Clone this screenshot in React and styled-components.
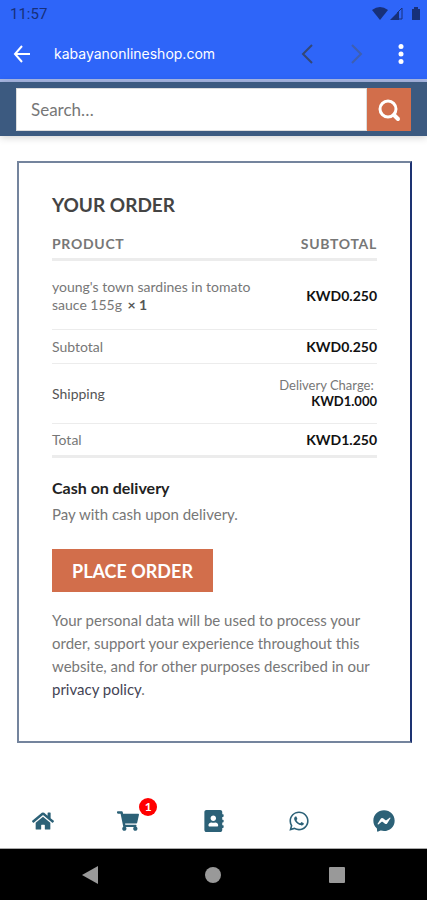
import styled, { createGlobalStyle } from "styled-components";
import {
  FaAddressBook,
  FaFacebookMessenger,
  FaHome,
  FaShoppingCart,
  FaWhatsapp,
} from "react-icons/fa";

const GlobalStyle = createGlobalStyle`
  * {
    box-sizing: border-box;
  }

  body {
    margin: 0;
    background: #fff;
    color: #777;
    font-family: Lato, "Liberation Sans", sans-serif;
    font-size: 14px;
  }

  svg {
    display: block;
  }
`;

const Page = styled.div`
  display: flex;
  flex-direction: column;
  min-height: 100vh;
`;

const StatusBar = styled.div`
  display: flex;
  align-items: center;
  justify-content: space-between;
  height: 28px;
  padding: 0 6px 0 10px;
  background: #2e65f9;
  color: #17307a;
  font-family: Roboto, sans-serif;
  font-size: 15px;
`;

const BrowserBar = styled.div`
  display: flex;
  align-items: center;
  height: 54px;
  padding: 0 23px 0 13px;
  border-bottom: 3px solid #a9b9e6;
  background: #2e65f9;
`;

const SiteName = styled.div`
  flex: 1;
  padding-left: 22px;
  color: #fff;
  font-family: Inter, sans-serif;
  font-size: 14px;
`;

const Button = styled.button`
  padding: 0;
  border: 0;
  background: none;
  color: #fff;
  font-family: inherit;
  cursor: pointer;
`;

const BarButton = styled(Button)`
  color: ${(props) => props.$color || "#fff"};
  margin-left: ${(props) => props.$gap || 0}px;
`;

const Header = styled.header`
  padding: 6px 16px 5px;
  background: #3c5a80;
  box-shadow: 0 1px 8px rgba(0, 0, 0, 0.2);
`;

const SearchForm = styled.form`
  display: flex;
  height: 43px;
`;

const SearchInput = styled.input`
  flex: 1;
  min-width: 0;
  padding: 0 14px;
  border: 1px solid #ddd;
  background: #fff;
  color: #555;
  font-family: inherit;
  font-size: 17px;

  &::placeholder {
    color: #777;
    opacity: 1;
  }
`;

const SearchButton = styled(Button)`
  display: flex;
  align-items: center;
  justify-content: center;
  width: 44px;
  background: #d26e4b;
`;

const Main = styled.main`
  flex: 1;
  padding: 25px 15px 51px 17px;
`;

const OrderBox = styled.section`
  padding: 31px 33px 40px;
  border: 2px solid #74849d;
  border-right-color: #1d3272;
`;

const Title = styled.h3`
  margin: 0;
  color: #444;
  font-size: 19px;
  font-weight: 700;
  line-height: 22px;
`;

const OrderTable = styled.table`
  width: 100%;
  border-collapse: collapse;
  line-height: 18px;

  th,
  td {
    padding: 8px 0 7px;
    border-bottom: 1px solid #ececec;
    font-weight: 400;
    text-align: left;
  }

  th:last-child,
  td:last-child {
    text-align: right;
    white-space: nowrap;
  }

  thead th {
    padding: 19px 0 5px;
    border-bottom: 3px solid #ececec;
    color: #777;
    font-weight: 700;
    letter-spacing: 0.05em;
  }

  tbody td {
    padding: 17px 0 15px;
  }

  tbody td:first-child {
    padding-right: 10px;
  }

  tfoot tr:last-child > * {
    padding: 7px 0 6px;
    border-bottom: 3px solid #ececec;
  }
`;

const Quantity = styled.strong`
  padding-left: 2px;
  color: #555;
`;

const Price = styled.strong`
  color: #111;
  font-size: ${(props) => (props.$small ? 13 : 14)}px;
`;

const RowLabel = styled.span`
  color: ${(props) => (props.$dark ? "#555" : "#777")};
`;

const Shipping = styled.div`
  padding: 5px 0 7px;
  font-size: 13px;
  line-height: 16px;
`;

const Payment = styled.div`
  padding: 17px 0 22px;
  font-size: 15px;
  line-height: 26px;
`;

const Method = styled.div`
  color: #222;
  font-size: 16px;
  font-weight: 700;
`;

const PlaceOrder = styled(Button)`
  height: 43px;
  padding: 0 20px;
  background: #d26e4b;
  font-size: 18px;
  font-weight: 700;
`;

const Privacy = styled.p`
  margin: 17px 0 0;
  font-size: 15px;
  line-height: 23px;

  a {
    color: #445;
    text-decoration: none;
  }
`;

const TabBar = styled.nav`
  display: flex;
  height: 55px;
  border-bottom: 1px solid #aaa;
`;

const Tab = styled.a`
  flex: 1;
  display: flex;
  align-items: center;
  justify-content: center;
  color: #2c6177;
  font-size: 22px;
`;

const TabIcon = styled.span`
  position: relative;
`;

const Badge = styled.span`
  position: absolute;
  top: -12px;
  right: -18px;
  width: 18px;
  border-radius: 9px;
  background: #f00;
  color: #fff;
  font-size: 12px;
  font-weight: 700;
  line-height: 18px;
  text-align: center;
`;

const SystemBar = styled.div`
  display: flex;
  align-items: center;
  justify-content: space-around;
  height: 51px;
  padding: 0 28px;
  background: #000;
  color: #999;
`;

const tabs = [
  { name: "Home", Icon: FaHome },
  { name: "Cart", Icon: FaShoppingCart, count: 1 },
  { name: "Contact", Icon: FaAddressBook },
  { name: "WhatsApp", Icon: FaWhatsapp },
  { name: "Messenger", Icon: FaFacebookMessenger },
];

const StatusIcons = () => (
  <svg width="50" height="16" viewBox="0 0 50 16" fill="currentColor">
    <path d="M1 4Q9 -2 17 4L9 14Z" />
    <path d="M19 14L28 5V14Z" />
    <path d="M26 7L31 2V13H27" fill="none" stroke="currentColor" strokeWidth="1" />
    <path d="M41 3H43V1H47V3H49V14H41Z" />
  </svg>
);

const TopBar = () => (
  <>
    <StatusBar>
      <span>11:57</span>
      <StatusIcons />
    </StatusBar>
    <BrowserBar>
      <BarButton aria-label="Back">
        <svg width="19" height="20" fill="none" stroke="currentColor" strokeWidth="2">
          <path d="M17 10H3M9 2L2 10L9 18" />
        </svg>
      </BarButton>
      <SiteName>kabayanonlineshop.com</SiteName>
      <BarButton aria-label="Previous page" $color="#344775">
        <svg width="12" height="20" fill="none" stroke="currentColor" strokeWidth="2">
          <path d="M11 1L2 10L11 19" />
        </svg>
      </BarButton>
      <BarButton aria-label="Next page" $color="#3e5fb0" $gap={38}>
        <svg width="12" height="20" fill="none" stroke="currentColor" strokeWidth="2">
          <path d="M1 1L10 10L1 19" />
        </svg>
      </BarButton>
      <BarButton aria-label="Menu" $gap={35}>
        <svg width="6" height="20" viewBox="0 0 6 20" fill="currentColor">
          <circle cx="3" cy="2.5" r="2.5" />
          <circle cx="3" cy="10" r="2.5" />
          <circle cx="3" cy="17.5" r="2.5" />
        </svg>
      </BarButton>
    </BrowserBar>
  </>
);

const Search = () => (
  <Header>
    <SearchForm role="search" onSubmit={(e) => e.preventDefault()}>
      <SearchInput type="search" aria-label="Search" placeholder="Search…" />
      <SearchButton type="submit" aria-label="Submit search">
        <svg width="24" height="24" fill="none" stroke="currentColor" strokeWidth="3">
          <circle cx="11" cy="11" r="8" />
          <path d="M17 17L21 21" strokeWidth="4" strokeLinecap="round" />
        </svg>
      </SearchButton>
    </SearchForm>
  </Header>
);

const Order = () => (
  <OrderBox>
    <Title>YOUR ORDER</Title>
    <OrderTable>
      <thead>
        <tr>
          <th scope="col">PRODUCT</th>
          <th scope="col">SUBTOTAL</th>
        </tr>
      </thead>
      <tbody>
        <tr>
          <td>
            young's town sardines in tomato sauce 155g{" "}
            <Quantity>×&nbsp;1</Quantity>
          </td>
          <td>
            <Price>KWD0.250</Price>
          </td>
        </tr>
      </tbody>
      <tfoot>
        <tr>
          <th scope="row">
            <RowLabel>Subtotal</RowLabel>
          </th>
          <td>
            <Price>KWD0.250</Price>
          </td>
        </tr>
        <tr>
          <th scope="row">
            <RowLabel $dark>Shipping</RowLabel>
          </th>
          <td>
            <Shipping>
              Delivery Charge:&nbsp;
              <br />
              <Price $small>KWD1.000</Price>
            </Shipping>
          </td>
        </tr>
        <tr>
          <th scope="row">
            <RowLabel>Total</RowLabel>
          </th>
          <td>
            <Price>KWD1.250</Price>
          </td>
        </tr>
      </tfoot>
    </OrderTable>
    <Payment>
      <Method>Cash on delivery</Method>
      <div>Pay with cash upon delivery.</div>
    </Payment>
    <PlaceOrder type="button">PLACE ORDER</PlaceOrder>
    <Privacy>
      Your personal data will be used to process your order, support your
      experience throughout this website, and for other purposes described in
      our <a href="#privacy">privacy policy</a>.
    </Privacy>
  </OrderBox>
);

export default function App() {
  return (
    <Page>
      <GlobalStyle />
      <TopBar />
      <Search />
      <Main>
        <Order />
      </Main>
      <TabBar>
        {tabs.map(({ name, Icon, count }) => (
          <Tab key={name} href={`#${name.toLowerCase()}`} aria-label={name}>
            <TabIcon>
              <Icon />
              {count && <Badge>{count}</Badge>}
            </TabIcon>
          </Tab>
        ))}
      </TabBar>
      <SystemBar>
        <svg width="18" height="20" fill="currentColor">
          <path d="M1 10L17 1V19Z" />
        </svg>
        <svg width="18" height="18" fill="currentColor">
          <circle cx="9" cy="9" r="8" />
        </svg>
        <svg width="18" height="18" fill="currentColor">
          <rect x="1" y="1" width="16" height="16" rx="1" />
        </svg>
      </SystemBar>
    </Page>
  );
}
